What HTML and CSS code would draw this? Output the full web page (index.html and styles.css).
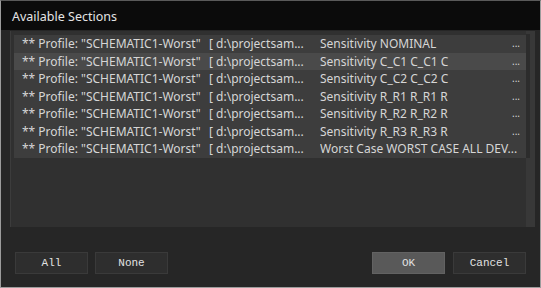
FILE: index.html
```html
<!DOCTYPE html>
<html lang="en">
<head>
    <meta charset="UTF-8">
    <title>Available Sections</title>
    <link rel="stylesheet" href="styles.css">
</head>
<body>

<div class="dialog">
    <div class="title-bar">Available Sections</div>

    <div class="list-box">
        <div class="list-items">
            <div class="row">
                <span class="col-profile">** Profile: "SCHEMATIC1-Worst"</span>
                <span class="col-path">[ d:\projectsam...</span>
                <span class="col-section">Sensitivity NOMINAL</span>
                <span class="col-more">...</span>
            </div>
            <div class="row row-hover">
                <span class="col-profile">** Profile: "SCHEMATIC1-Worst"</span>
                <span class="col-path">[ d:\projectsam...</span>
                <span class="col-section">Sensitivity C_C1 C_C1 C</span>
                <span class="col-more">...</span>
            </div>
            <div class="row">
                <span class="col-profile">** Profile: "SCHEMATIC1-Worst"</span>
                <span class="col-path">[ d:\projectsam...</span>
                <span class="col-section">Sensitivity C_C2 C_C2 C</span>
                <span class="col-more">...</span>
            </div>
            <div class="row">
                <span class="col-profile">** Profile: "SCHEMATIC1-Worst"</span>
                <span class="col-path">[ d:\projectsam...</span>
                <span class="col-section">Sensitivity R_R1 R_R1 R</span>
                <span class="col-more">...</span>
            </div>
            <div class="row">
                <span class="col-profile">** Profile: "SCHEMATIC1-Worst"</span>
                <span class="col-path">[ d:\projectsam...</span>
                <span class="col-section">Sensitivity R_R2 R_R2 R</span>
                <span class="col-more">...</span>
            </div>
            <div class="row">
                <span class="col-profile">** Profile: "SCHEMATIC1-Worst"</span>
                <span class="col-path">[ d:\projectsam...</span>
                <span class="col-section">Sensitivity R_R3 R_R3 R</span>
                <span class="col-more">...</span>
            </div>
            <div class="row">
                <span class="col-profile">** Profile: "SCHEMATIC1-Worst"</span>
                <span class="col-path">[ d:\projectsam...</span>
                <span class="col-section col-wide">Worst Case WORST CASE ALL DEV...</span>
            </div>
        </div>
        <div class="scroll-track"><div class="scroll-thumb"></div></div>
    </div>

    <div class="button-row">
        <div class="button-group">
            <button class="btn">All</button>
            <button class="btn">None</button>
        </div>
        <div class="button-group group-right">
            <button class="btn btn-default">OK</button>
            <button class="btn">Cancel</button>
        </div>
    </div>
</div>

</body>
</html>
```

FILE: styles.css
```css
* {
    margin: 0;
    padding: 0;
    box-sizing: border-box;
}

body {
    font-family: "Noto Sans", "Open Sans", sans-serif;
    background-color: #262626;
    width: 541px;
    height: 288px;
    overflow: hidden;
}

.dialog {
    width: 541px;
    height: 288px;
    border: 1px solid #9c9c9c;
    border-top-color: #5a5a5a;
    background-color: #262626;
    display: flex;
    flex-direction: column;
}

.title-bar {
    height: 29px;
    line-height: 32px;
    padding-left: 11px;
    background-color: #0b0b0b;
    color: #e4e4e4;
    font-size: 12.5px;
}

/* Liste der Abschnitte */
.list-box {
    margin: 1px 5px 0 9px;
    height: 196px;
    display: flex;
    background-color: #303030;
    border-left: 1px solid #3c3c3c;
}

.list-items {
    flex: 1;
    padding: 4px 0 0 3px;
}

.row {
    display: flex;
    height: 17.5px;
    line-height: 17.5px;
    font-size: 12px;
    color: #d6d6d6;
    background-color: #3d3d3d;
    white-space: nowrap;
    overflow: hidden;
}

.row-hover {
    background-color: #4a4a4a;
}

.col-profile {
    width: 195px;
    padding-left: 8px;
    overflow: hidden;
}

.col-path {
    width: 111px;
    overflow: hidden;
}

.col-section {
    width: 192px;
    overflow: hidden;
}

.col-wide {
    width: auto;
    flex: 1;
}

.col-more {
    flex: 1;
    font-size: 10px;
}

.scroll-track {
    width: 9px;
    padding-top: 3px;
    background-color: #383838;
}

.scroll-thumb {
    width: 4px;
    height: 124px;
    background-color: #2c2c2c;
}

/* Tasten unten */
.button-row {
    display: flex;
    justify-content: space-between;
    padding: 0 14px;
    margin-top: 25px;
}

.button-group {
    display: flex;
    gap: 7px;
}

.group-right {
    gap: 8px;
}

.btn {
    width: 73px;
    height: 22px;
    font-family: "Liberation Mono", monospace;
    font-size: 11px;
    color: #e2e2e2;
    background-color: #2e2e2e;
    border: 1px solid #3a3a3a;
}

.btn-default {
    background-color: #595959;
    border-color: #626262;
}
```
